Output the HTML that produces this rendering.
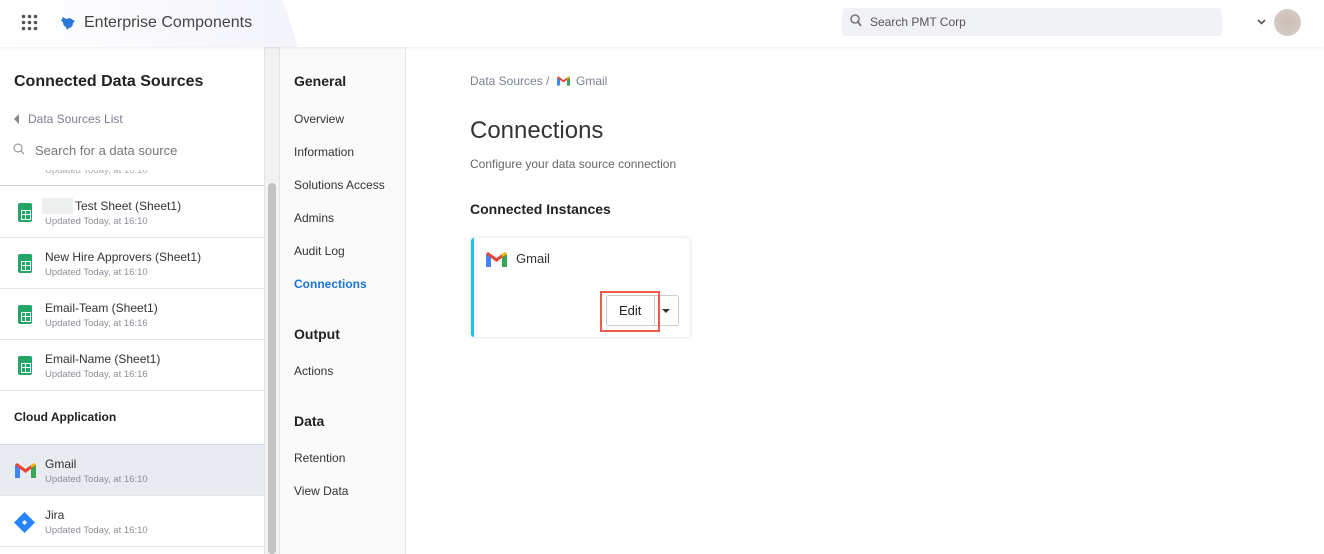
<!DOCTYPE html>
<html><head><meta charset="utf-8"><style>
*{box-sizing:border-box;margin:0;padding:0}
body{width:1324px;height:554px;overflow:hidden;font-family:"Liberation Sans",Arial,sans-serif;background:#fff;position:relative;color:#333}
.hdr{position:absolute;left:0;top:0;width:1324px;height:47px;background:#fff;box-shadow:0 1px 3px rgba(0,0,0,.08);z-index:5}
.hdrl{position:absolute;left:0;top:0;width:300px;height:47px;background:linear-gradient(90deg,#fff,#f3f4fb);clip-path:polygon(0 0,283px 0,298px 47px,0 47px)}
.abs{position:absolute}
.left{position:absolute;left:0;top:47px;width:264px;height:507px}
.sb{position:absolute;left:264px;top:47px;width:16px;height:507px;background:#f2f2f2;border-left:1px solid #e4e4e4;border-right:1px solid #e4e4e4}
.thumb{position:absolute;left:268px;top:183px;width:8px;height:371px;background:#c4c4c4;border-radius:4px}
.nav{position:absolute;left:280px;top:47px;width:126px;height:507px;background:#fafafa;border-right:1px solid #e6e6e6}
.nav div{position:absolute;left:14px;font-size:12px;color:#333}
.nav .h{font-size:14px;font-weight:bold;color:#222}
.row{position:absolute;left:0;width:264px;height:51px;border-bottom:1px solid #e2e4e8}
.row .t{position:absolute;left:45px;top:12px;font-size:12px;color:#333}
.row .s{position:absolute;left:45px;top:29px;font-size:9.5px;color:#8a8f98}
.sheet{position:absolute;left:18px;top:16px;width:14px;height:19px;background:#23a566;border-radius:2px}
.sheet:after{content:"";position:absolute;left:3px;top:7px;width:8px;height:8px;border:1px solid #fff;background:linear-gradient(#fff,#fff) 3px 0/1px 8px no-repeat,linear-gradient(#fff,#fff) 0 3px/8px 1px no-repeat}
</style></head><body>
<div class="hdr">
 <div class="hdrl"></div>
 <svg class="abs" style="left:21px;top:14px" width="17" height="17" viewBox="0 0 17 17" fill="#555"><circle cx="2.5" cy="2.5" r="1.8"/><circle cx="8.5" cy="2.5" r="1.8"/><circle cx="14.5" cy="2.5" r="1.8"/><circle cx="2.5" cy="8.5" r="1.8"/><circle cx="8.5" cy="8.5" r="1.8"/><circle cx="14.5" cy="8.5" r="1.8"/><circle cx="2.5" cy="14.5" r="1.8"/><circle cx="8.5" cy="14.5" r="1.8"/><circle cx="14.5" cy="14.5" r="1.8"/></svg>
 <svg class="abs" style="left:61px;top:16px" width="15" height="14" viewBox="0 0 15 14"><path d="M2 1 L5 3 Q9 1 12 4 L14 5 L12 7 Q12 11 8 12 L6 14 L5 11 Q2 10 2 6 L0 5 Z" fill="#2a77d6"/></svg>
 <div class="abs" style="left:84px;top:14px;font-size:16px;color:#444">Enterprise Components</div>
 <div class="abs" style="left:842px;top:8px;width:380px;height:28px;background:#f1f2f6;border-radius:4px"></div>
 <svg class="abs" style="left:850px;top:14px" width="12" height="13" viewBox="0 0 12 13"><circle cx="5" cy="5" r="4" fill="none" stroke="#777" stroke-width="1.6"/><path d="M8 8 L11 12" stroke="#777" stroke-width="1.8"/></svg>
 <div class="abs" style="left:870px;top:15px;font-size:12px;color:#555">Search PMT Corp</div>
 <svg class="abs" style="left:1257px;top:19px" width="9" height="6" viewBox="0 0 9 6"><path d="M1 1 L4.5 4.5 L8 1" stroke="#555" stroke-width="1.6" fill="none"/></svg>
 <div class="abs" style="left:1274px;top:9px;width:27px;height:27px;border-radius:50%;background:radial-gradient(#cdbfb8,#d8cdc8)"></div>
</div>

<div class="left">
 <div class="abs" style="left:14px;top:26px;font-size:16px;font-weight:bold;color:#222">Connected Data Sources</div>
 <svg class="abs" style="left:14px;top:67px" width="6" height="10"><path d="M5 0 L0 5 L5 10Z" fill="#888"/></svg>
 <div class="abs" style="left:28px;top:65px;font-size:12px;color:#7a8190">Data Sources List</div>
 <svg class="abs" style="left:13px;top:96px" width="12" height="12" viewBox="0 0 12 12"><circle cx="5" cy="5" r="4" fill="none" stroke="#888" stroke-width="1"/><path d="M8 8 L11 11" stroke="#888"/></svg>
 <div class="abs" style="left:35px;top:96px;font-size:13px;color:#777">Search for a data source</div>
 <div class="abs" style="left:0;top:123px;width:264px;height:16px;overflow:hidden;border-bottom:1px solid #cfd3da"><div style="position:absolute;left:45px;top:-5px;font-size:9.5px;color:#aaa">Updated Today, at 16:10</div></div>
 <div class="row" style="top:140px"><div class="sheet"></div><div class="abs" style="left:42px;top:11px;width:31px;height:16px;background:#eef0ef"></div><div class="t" style="left:75px">Test Sheet (Sheet1)</div><div class="s">Updated Today, at 16:10</div></div>
 <div class="row" style="top:191px"><div class="sheet"></div><div class="t">New Hire Approvers (Sheet1)</div><div class="s">Updated Today, at 16:10</div></div>
 <div class="row" style="top:242px"><div class="sheet"></div><div class="t">Email-Team (Sheet1)</div><div class="s">Updated Today, at 16:16</div></div>
 <div class="row" style="top:293px"><div class="sheet"></div><div class="t">Email-Name (Sheet1)</div><div class="s">Updated Today, at 16:16</div></div>
 <div class="row" style="top:344px;height:54px;border-bottom:1px solid #cfd3da"><div class="abs" style="left:14px;top:19px;font-size:12px;font-weight:bold;color:#222">Cloud Application</div></div>
 <div class="row" style="top:398px;background:#e8ebf0">
  <svg class="abs" style="left:15px;top:18px" width="21" height="15" viewBox="0 0 21 15"><path d="M0 2 V15 H5 V5Z" fill="#4285f4"/><path d="M21 2 V15 H16 V5Z" fill="#34a853"/><path d="M0 2 L10.5 10 L21 2 L19 0 L10.5 6 L2 0Z" fill="#ea4335"/><path d="M16 5 L21 2 L19 0 L16 2Z" fill="#fbbc04"/></svg>
  <div class="t">Gmail</div><div class="s">Updated Today, at 16:10</div></div>
 <div class="row" style="top:449px">
  <svg class="abs" style="left:14px;top:16px" width="21" height="21" viewBox="0 0 21 21"><path d="M10.5 0 L21 10.5 L10.5 21 L0 10.5Z" fill="#2684ff"/><path d="M10.5 8 L13 10.5 L10.5 13 L8 10.5Z" fill="#fff"/></svg>
  <div class="t">Jira</div><div class="s">Updated Today, at 16:10</div></div>
</div>
<div class="sb"></div><div class="thumb"></div>

<div class="nav">
 <div class="h" style="top:26px">General</div>
 <div style="top:65px">Overview</div>
 <div style="top:98px">Information</div>
 <div style="top:131px">Solutions Access</div>
 <div style="top:164px">Admins</div>
 <div style="top:197px">Audit Log</div>
 <div style="top:230px;color:#1a73d9;font-weight:bold">Connections</div>
 <div class="h" style="top:279px">Output</div>
 <div style="top:317px">Actions</div>
 <div class="h" style="top:366px">Data</div>
 <div style="top:404px">Retention</div>
 <div style="top:437px">View Data</div>
</div>

<div class="abs" style="left:470px;top:74px;font-size:12px;color:#7a8190">Data Sources /</div>
<svg class="abs" style="left:557px;top:76px" width="13" height="10" viewBox="0 0 21 15"><path d="M0 2 V15 H5 V5Z" fill="#4285f4"/><path d="M21 2 V15 H16 V5Z" fill="#34a853"/><path d="M0 2 L10.5 10 L21 2 L19 0 L10.5 6 L2 0Z" fill="#ea4335"/><path d="M16 5 L21 2 L19 0 L16 2Z" fill="#fbbc04"/></svg>
<div class="abs" style="left:576px;top:74px;font-size:12px;color:#7a8190">Gmail</div>
<div class="abs" style="left:470px;top:117px;font-size:24px;color:#333">Connections</div>
<div class="abs" style="left:470px;top:157px;font-size:12px;color:#666">Configure your data source connection</div>
<div class="abs" style="left:470px;top:201px;font-size:14px;font-weight:bold;color:#222">Connected Instances</div>
<div class="abs" style="left:471px;top:238px;width:219px;height:99px;background:#fff;border-radius:3px;box-shadow:0 0 3px rgba(0,0,0,.18);border-left:3px solid #1ec0f0"></div>
<svg class="abs" style="left:486px;top:252px" width="21" height="15" viewBox="0 0 21 15"><path d="M0 2 V15 H5 V5Z" fill="#4285f4"/><path d="M21 2 V15 H16 V5Z" fill="#34a853"/><path d="M0 2 L10.5 10 L21 2 L19 0 L10.5 6 L2 0Z" fill="#ea4335"/><path d="M16 5 L21 2 L19 0 L16 2Z" fill="#fbbc04"/></svg>
<div class="abs" style="left:516px;top:251px;font-size:13px;color:#333">Gmail</div>
<div class="abs" style="left:606px;top:295px;width:73px;height:31px;border:1px solid #ccc;border-radius:3px;background:#fff"></div>
<div class="abs" style="left:654px;top:295px;width:1px;height:31px;background:#ccc"></div>
<div class="abs" style="left:619px;top:303px;font-size:13px;color:#222">Edit</div>
<svg class="abs" style="left:662px;top:309px" width="8" height="5"><path d="M0 0 H8 L4 4Z" fill="#333"/></svg>
<div class="abs" style="left:600px;top:291px;width:60px;height:41px;border:2px solid #ef5a4e"></div>
</body></html>
